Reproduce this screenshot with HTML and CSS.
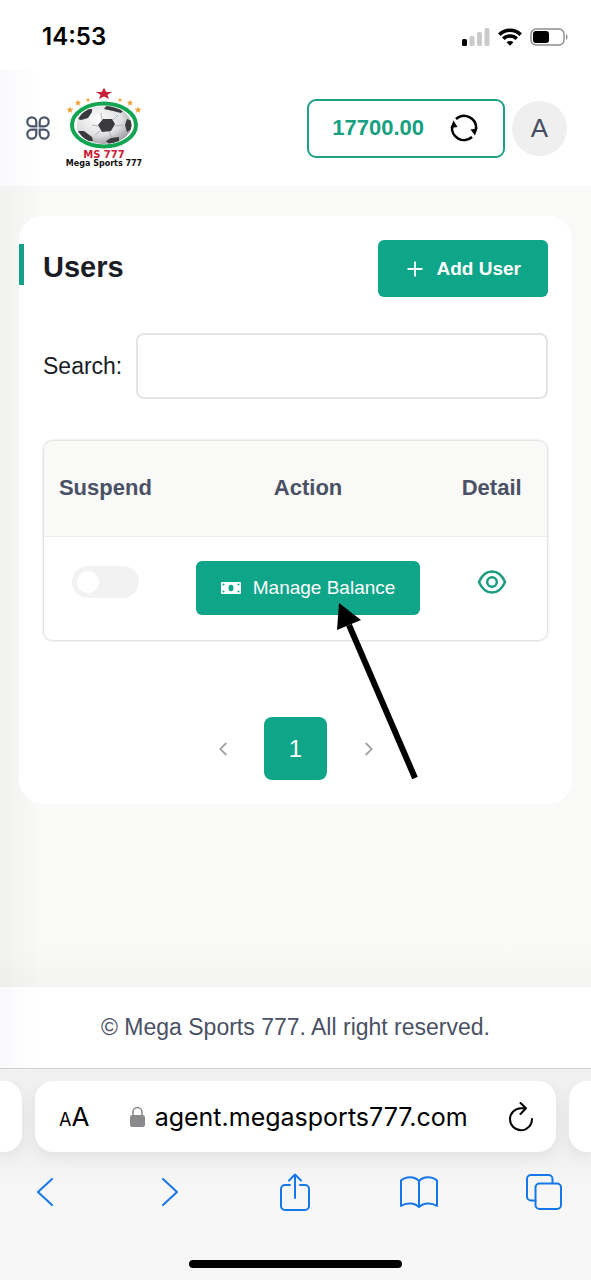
FILE: index.html
```html
<!DOCTYPE html>
<html lang="en">
<head>
<meta charset="utf-8">
<meta name="viewport" content="width=device-width, initial-scale=1">
<title>Users</title>
<link rel="stylesheet" href="styles.css">
</head>
<body>
<div class="status">
  <span class="clock">14:53</span>
  <div class="status-icons">
    <svg width="28" height="18" viewBox="0 0 28 18"><rect x="0" y="11" width="5" height="7" rx="1.5"/><g fill="#cbcbcb"><rect x="7.500" y="8" width="5" height="10" rx="1.500"/><rect x="15" y="4" width="5" height="14" rx="1.500"/><rect x="22.500" y="0" width="5" height="18" rx="1.500"/></g></svg>
    <svg width="24" height="18" viewBox="0 0 24 18" fill="none" stroke="#000" stroke-width="3.600"><path d="M1.300 6.600a15.300 15.300 0 0 1 21.400 0"/><path d="M5.300 10.700a9.500 9.500 0 0 1 13.400 0"/><path d="M12 17.800l-3.400-3.500a4.800 4.800 0 0 1 6.800 0z" fill="#000" stroke="none"/></svg>
    <svg width="39" height="18" viewBox="0 0 39 18"><rect x="1" y="1" width="33" height="16" rx="5" fill="#fff" stroke="#8e8e8e" stroke-width="1.500"/><rect x="3" y="3" width="16" height="12" rx="3"/><path d="M36 6c2 .8 2 5.200 0 6z" fill="#8e8e8e"/></svg>
  </div>
</div>

<header class="topbar">
  <button class="plain menu" aria-label="Menu">
    <svg width="24" height="24" viewBox="0 0 24 24" fill="none" stroke="#4b5569" stroke-width="2.200"><path d="M10.300 10.300H5.700a4.500 4.500 0 1 1 4.600-4.600z"/><path d="M13.700 10.300h4.600a4.500 4.500 0 1 0-4.600-4.600z"/><path d="M10.300 13.700H5.700a4.500 4.500 0 1 0 4.600 4.600z"/><path d="M13.700 13.700h4.600a4.500 4.500 0 1 1-4.600 4.600z"/></svg>
  </button>
  <a class="logo" href="#">
    <svg width="78" height="62" viewBox="0 0 78 62">
      <defs>
        <radialGradient id="ball" cx=".4" cy=".35" r=".7"><stop offset="0" stop-color="#fff"/><stop offset=".6" stop-color="#e0e0e2"/><stop offset="1" stop-color="#98989c"/></radialGradient>
        <clipPath id="ballclip"><ellipse cx="39" cy="37" rx="27.500" ry="19"/></clipPath>
        <path id="star" d="M0-10 2.600-3.300 9.500-3.100 4.100 1.300 5.900 8.100 0 4.200-5.900 8.100-4.100 1.300-9.500-3.100-2.600-3.300z"/>
      </defs>
      <ellipse cx="39" cy="37" rx="32" ry="21.500" fill="#fff" stroke="#12a551" stroke-width="4"/>
      <ellipse cx="39" cy="37" rx="27.500" ry="19" fill="url(#ball)"/>
      <g clip-path="url(#ballclip)">
        <g fill="none" stroke="#aaaaae" stroke-width=".8"><path d="M33 38l-6-1M37 32l-1-7M48 32l5-5M50 38l8-1M44 43l2 6M35 43l-5 4"/></g>
        <g fill="#3a3a3f"><path d="M33 37l5-6 9 0 3 5-4 7-9 1z"/><path d="M13 31l6-10 8 0 0 3-4 6-7 2z"/><path d="M39 21l3-4 10 1 6 5-2 2-8-2z"/><path d="M60 37l2-6 5 2v8l-5 3z"/><path d="M12 43l7 0 8 6 1 4-7 0z"/><path d="M41 53l5-3 8-1 0 5-8 4z"/></g>
      </g>
      <use href="#star" transform="translate(39 6) scale(.85 .62)" fill="#c92035"/>
      <g fill="#f0a035"><use href="#star" transform="translate(5 22) scale(.36 .38)"/><use href="#star" transform="translate(13 15) scale(.34 .35)"/><use href="#star" transform="translate(23 12) scale(.25 .25)"/><use href="#star" transform="translate(55 12) scale(.25 .25)"/><use href="#star" transform="translate(65 15) scale(.34 .35)"/><use href="#star" transform="translate(73 22) scale(.36 .38)"/></g>
    </svg>
    <span class="logo-short">MS 777</span>
    <span class="logo-long">Mega Sports 777</span>
  </a>
  <button class="balance">17700.00
    <svg width="28" height="28" viewBox="0 0 28 28" fill="none" stroke="#000" stroke-width="2.600"><path d="M6 5A12 12 0 0 1 26 15"/><path d="M22 23A12 12 0 0 1 2.200 12"/><path d="M20.500 15.500l7-1-2.500 7z" fill="#000" stroke="none"/><path d="M3.500 6.500L.5 14l7-1z" fill="#000" stroke="none"/></svg>
  </button>
  <button class="avatar">A</button>
</header>

<main class="content">
  <section class="card">
    <div class="card-head">
      <h1 class="title">Users</h1>
      <button class="btn add"><svg width="16" height="16" viewBox="0 0 16 16" stroke="#fff" stroke-width="1.800"><path d="M8 .5v15M.5 8h15"/></svg>Add User</button>
    </div>
    <div class="search">
      <label for="q">Search:</label>
      <input id="q" type="text">
    </div>
    <div class="table-box">
      <table class="users">
        <thead><tr><th class="c-suspend">Suspend</th><th class="c-action">Action</th><th class="c-detail">Detail</th></tr></thead>
        <tbody><tr>
          <td class="c-suspend"><input class="toggle cell-icon" type="checkbox" aria-label="Suspend"></td>
          <td class="c-action"><button class="btn manage"><svg width="20" height="12" viewBox="0 0 20 12"><rect width="20" height="12" rx="1" fill="#fff"/><ellipse cx="10" cy="6" rx="2.500" ry="3.200" fill="#0fa588"/><g fill="#0fa588"><circle cx="2.500" cy="2.500" r="1"/><circle cx="17.500" cy="2.500" r="1"/><circle cx="2.500" cy="9.500" r="1"/><circle cx="17.500" cy="9.500" r="1"/></g></svg>Manage Balance</button></td>
          <td class="c-detail"><button class="plain cell-icon" aria-label="Detail"><svg width="30" height="24" viewBox="0 0 30 24" fill="none" stroke="#1c9c80" stroke-width="2.500"><path d="M2 12C5 5 9.500 1.500 15 1.500S25 5 28 12c-3 7-7.500 10.500-13 10.500S5 19 2 12z"/><circle cx="15" cy="12" r="4.800"/></svg></button></td>
        </tr></tbody>
      </table>
    </div>
    <nav class="pager" aria-label="Pages">
      <button class="page" aria-label="Previous"><svg width="8" height="14" viewBox="0 0 8 14" fill="none" stroke="#a3a3a3" stroke-width="1.800"><path d="M7.300 1L1.300 7l6 6"/></svg></button>
      <button class="page current">1</button>
      <button class="page" aria-label="Next"><svg width="8" height="14" viewBox="0 0 8 14" fill="none" stroke="#a3a3a3" stroke-width="1.800"><path d="M.7 1l6 6-6 6"/></svg></button>
    </nav>
    <svg class="pointer" width="90" height="180" viewBox="0 0 90 180"><path d="M80 177L14 24" stroke="#000" stroke-width="6"/><path d="M4 2l22 17-24 10z"/></svg>
  </section>
</main>

<footer class="footer">© Mega Sports 777. All right reserved.</footer>

<div class="browser">
  <div class="tabs">
    <div class="tab side-left"></div>
    <div class="tab address">
      <button class="plain text-size" aria-label="Text size"><span class="small-a">A</span><span class="big-a">A</span></button>
      <div class="host"><svg width="15" height="21" viewBox="0 0 15 21"><path d="M3 10V6a4.500 4.500 0 0 1 9 0v4" fill="none" stroke="#8a8a8d" stroke-width="1.600"/><rect y="9" width="15" height="12" rx="2.200" fill="#8a8a8d"/></svg><span>agent.megasports777.com</span></div>
      <button class="plain" aria-label="Reload"><svg width="26" height="30" viewBox="0 0 26 30" fill="none" stroke="#000" stroke-width="2" stroke-linecap="round" stroke-linejoin="round"><path d="M17 6.200H13A11 11 0 1 0 24 17"/><path d="M12.500 1l5.500 5.200-5.500 5.800"/></svg></button>
    </div>
    <div class="tab side-right"></div>
  </div>
  <div class="tools">
    <button class="plain" aria-label="Back"><svg width="18" height="30" viewBox="0 0 18 30"><path d="M16 2L2 15l14 13"/></svg></button>
    <button class="plain" aria-label="Forward"><svg width="18" height="30" viewBox="0 0 18 30"><path d="M2 2l14 13L2 28"/></svg></button>
    <button class="plain" aria-label="Share"><svg width="30" height="38" viewBox="0 0 30 38"><path d="M10 12H5a4 4 0 0 0-4 4v17a4 4 0 0 0 4 4h20a4 4 0 0 0 4-4V16a4 4 0 0 0-4-4h-5M15 25V2M9 7.500L15 1.500l6 6"/></svg></button>
    <button class="plain" aria-label="Bookmarks"><svg width="38" height="32" viewBox="0 0 38 32"><path d="M19 5C14.500 0 6 0 1 4.500V30c5-3.500 13.500-3.500 18 1 4.500-4.500 13-4.500 18-1V4.500C32 0 23.500 0 19 5zM19 5v25"/></svg></button>
    <button class="plain" aria-label="Tabs"><svg width="36" height="36" viewBox="0 0 36 36"><path d="M9.500 26.500H5a4 4 0 0 1-4-4V5a4 4 0 0 1 4-4h17.500a4 4 0 0 1 4 4v4"/><rect x="9.500" y="9.500" width="25.500" height="25.500" rx="4"/></svg></button>
  </div>
  <div class="home"></div>
</div>
</body>
</html>
```
FILE: styles.css
```css
* { box-sizing: border-box; }
body {
  margin: 0;
  min-height: 100vh;
  display: flex;
  flex-direction: column;
  background: #fff;
  color: #1a1d26;
  font-family: "Liberation Sans", Arial, sans-serif;
}
svg { display: block; flex: none; }
button { font-family: inherit; cursor: pointer; }
.plain { border: 0; padding: 0; background: none; }

.status {
  display: flex;
  justify-content: space-between;
  align-items: center;
  height: 70px;
  padding: 4px 22px 0 42px;
}
.clock { font: 600 24px/32px Inter, sans-serif; color: #000; }
.status-icons { display: flex; align-items: center; gap: 8px; }

.topbar {
  display: flex;
  align-items: center;
  height: 116px;
  padding: 0 24px 0 26px;
  background: linear-gradient(90deg, #f9f9fc, #fff 40px);
}
.logo {
  display: flex;
  flex-direction: column;
  align-items: center;
  margin: 0 auto 0 15px;
  font-family: "DejaVu Sans", sans-serif;
  font-weight: 700;
  text-decoration: none;
  white-space: nowrap;
}
.logo-short { font-size: 10px; line-height: 9px; color: #c92035; }
.logo-long { font-size: 8px; line-height: 9px; color: #111; }
.balance {
  display: flex;
  align-items: center;
  gap: 26px;
  height: 59px;
  padding: 0 25px 0 23px;
  border: 2px solid #1fa184;
  border-radius: 9px;
  background: #fff;
  color: #179f82;
  font-size: 22px;
  font-weight: 700;
}
.avatar {
  width: 55px;
  height: 55px;
  margin-left: 7px;
  padding: 0;
  border: 0;
  border-radius: 50%;
  background: #efefef;
  color: #474d61;
  font-size: 26px;
}

.content {
  flex: 1;
  padding: 30px 19px;
  background:
    linear-gradient(0deg, rgba(120, 120, 110, .04), transparent 40px),
    linear-gradient(90deg, #f2f2f0, #f9f9f7 42px);
}
.card {
  position: relative;
  padding: 24px 0;
  border-radius: 24px;
  background: #fff;
}
.card-head {
  display: flex;
  justify-content: space-between;
  align-items: flex-start;
  padding-right: 24px;
}
.title {
  margin: 4px 0 0;
  padding: 6px 0 0 19px;
  border-left: 5px solid #16a085;
  font-size: 29px;
  line-height: 35px;
}
.btn {
  display: inline-flex;
  align-items: center;
  border: 0;
  border-radius: 6px;
  background: #0fa588;
  color: #fff;
  font-size: 19px;
  white-space: nowrap;
}
.add { gap: 14px; height: 57px; padding: 0 27px 0 29px; font-weight: 700; }
.manage { gap: 12px; height: 54px; padding: 0 25px; }

.search {
  display: flex;
  align-items: center;
  gap: 14px;
  margin: 36px 24px 0;
  font-size: 23px;
}
.search input {
  flex: 1;
  min-width: 0;
  height: 66px;
  padding: 0 16px;
  border: 2px solid #e4e4e4;
  border-radius: 8px;
  background: #fff;
  font: inherit;
}

.table-box {
  margin: 41px 24px 0;
  border: 1px solid #e4e4e4;
  border-radius: 10px;
  box-shadow: 0 0 2px rgba(0, 0, 0, .18);
  overflow: hidden;
}
.users { width: 100%; border-collapse: collapse; table-layout: fixed; text-align: center; }
.users th {
  height: 95px;
  padding: 0;
  border-bottom: 1px solid #ececec;
  background: #f9f9f8;
  color: #4a5164;
  font-size: 22px;
}
.users td { height: 104px; padding: 0; vertical-align: middle; }
.users .c-suspend { width: 27%; padding-right: 13px; }
.users .c-action { width: 51%; }
.users .c-detail { width: 22%; }
.cell-icon { margin: 0 0 12px; vertical-align: middle; }
.toggle {
  appearance: none;
  width: 67px;
  height: 32px;
  padding: 5px;
  border-radius: 16px;
  background: #f2f2f2;
}
.toggle::before {
  content: "";
  display: block;
  width: 22px;
  height: 22px;
  border-radius: 50%;
  background: #fff;
}
.toggle:checked { background: #0fa588; }
.toggle:checked::before { margin-left: auto; }

.pager { display: flex; justify-content: center; gap: 10px; margin-top: 76px; }
.page {
  display: grid;
  place-items: center;
  width: 63px;
  height: 63px;
  padding: 0;
  border: 0;
  border-radius: 8px;
  background: none;
  font-size: 24px;
}
.page.current { background: #0fa588; color: #fff; }
.pointer { position: absolute; left: 316px; top: 385px; pointer-events: none; }

.footer {
  padding: 28px 16px;
  background: linear-gradient(90deg, #f9f9fc, #fff 36px);
  color: #4a5164;
  font-size: 23px;
  line-height: 25px;
  text-align: center;
}

.browser {
  padding: 12px 0 12px;
  border-top: 1px solid #cfcfd1;
  background: linear-gradient(#f1f1f2, #f0f0f1 80px, #f7f7f7 125px);
}
.tabs { display: flex; gap: 13px; overflow: hidden; padding-bottom: 20px; margin-bottom: -20px; }
.tab { height: 71px; background: #fff; box-shadow: 0 4px 16px rgba(0, 0, 0, .07); }
.side-left { width: 22px; border-radius: 0 18px 18px 0; }
.side-right { width: 22px; border-radius: 18px 0 0 18px; }
.address {
  flex: 1;
  display: flex;
  align-items: center;
  justify-content: space-between;
  padding: 0 22px 0 24px;
  border-radius: 18px;
  color: #000;
  font-family: Inter, sans-serif;
}
.text-size { font-family: Inter, sans-serif; color: #000; }
.small-a { font-size: 18px; }
.big-a { font-size: 26px; }
.host { display: flex; align-items: center; gap: 10px; font-size: 25px; }
.tools {
  display: flex;
  justify-content: space-between;
  align-items: center;
  height: 80px;
  padding: 0 28px 0 26px;
}
.tools button { display: grid; place-items: center; width: 38px; height: 40px; }
.tools svg { fill: none; stroke: #1677e8; stroke-width: 2; stroke-linecap: round; stroke-linejoin: round; }
.home {
  width: 36%;
  height: 8px;
  margin: 28px auto 0;
  border-radius: 4px;
  background: #000;
}
```
